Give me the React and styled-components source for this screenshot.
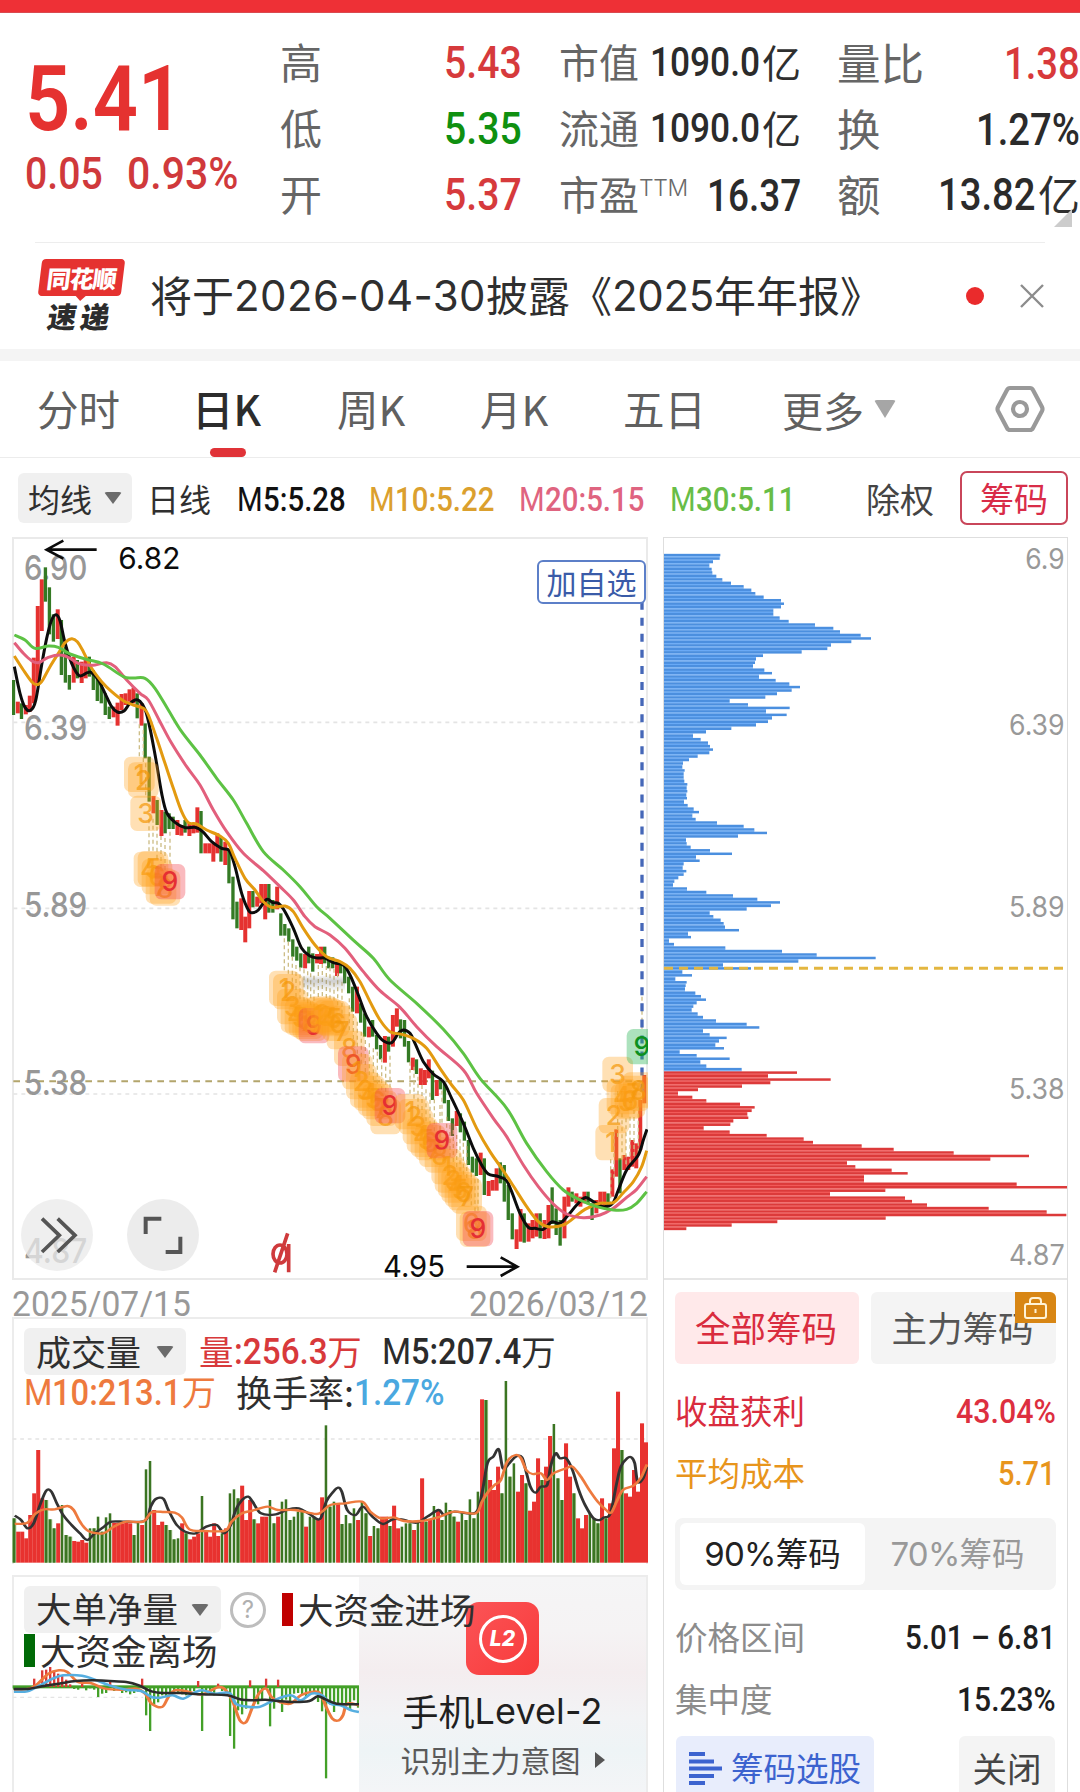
import React, { useState } from "react";
import styled, { createGlobalStyle } from "styled-components";

const GlobalStyle = createGlobalStyle`
    * {
        box-sizing: border-box;
    }

    body {
        margin: 0;
        background: #ffffff;
        overflow: hidden;
        font-family: Inter, "Noto Sans CJK SC", sans-serif;
        color: #2f2f2f;
    }
`;

/* ---------- data ---------- */

const RED = "#e53230";
const GREEN = "#0f9010";

const quoteRows = [
    { a: "高", av: "5.43", ac: "#d63a3c", b: "市值", bv: "1090.0", bu: "亿", c: "量比", cv: "1.38", cc: "#d8393b" },
    { a: "低", av: "5.35", ac: GREEN, b: "流通", bv: "1090.0", bu: "亿", c: "换", cv: "1.27%" },
    { a: "开", av: "5.37", ac: "#d63a3c", b: "市盈", sup: "TTM", bv: "16.37", c: "额", cv: "13.82", cu: "亿" },
];

const tabs = [
    { label: "分时", width: 155 },
    { label: "日K", width: 145 },
    { label: "周K", width: 143 },
    { label: "月K", width: 143 },
    { label: "五日", width: 159 },
];

const averages = [
    { name: "M", value: "5:5.28", color: "#111111", width: 132 },
    { name: "M", value: "10:5.22", color: "#dba02e", width: 150 },
    { name: "M", value: "20:5.15", color: "#df6480", width: 151 },
    { name: "M", value: "30:5.11", color: "#68bd47", width: 196 },
];

// one entry per trading day: direction, high, low
const candlesEarly = `g450-555 r515-550 g520-567 r525-553 r497-545 r383-520 r228-460 r148-303 g112-215 g172-313
g253-335 r238-327 g270-435 g350-458 g435-479 r380-458 g390-445 r395-459 r385-445 g380-440
g420-480 g440-513 g460-520 g490-555 g530-567 r530-562 r518-587 r492-540 r490-525 r478-515
r473-520 g490-565 r520-587 g580-685 g680-815 r798-850 g810-885 r840-918 g845-910 g850-897
g860-897 r870-915 r885-917 g870-908 r880-918 r880-910 r832-908 g843-970 r940-970 r940-970
r940-995 r910-970 g920-995 r935-1005 g960-1060 g1040-1168`;

const candlesLate = `g245-325 r235-330 r290-367 r213-325 g213-262 r230-260 r192-250 r192-298 g192-278 g240-278
r200-268 g280-347 g312-347 g325-365 g358-410 g380-422 g400-443 r402-445 g380-430 g400-455
r402-430 r380-432 g380-430 g410-445 g412-445 r425-468 g425-460 g440-490 g470-520 g500-575
r500-580 g550-608 g580-650 r620-652 g600-650 g645-688 g675-718 r648-728 g650-695 r585-680
r565-620 g598-655 g600-680 g663-727 r713-750 g718-762 r745-795 r750-795 r718-775 g752-840
r780-828 g780-808 g790-850 g840-903 g895-948 r873-918 g880-937 g905-962 g960-1035 g1010-1058
g1015-1068 r998-1065 g1015-1125 r1083-1128 r1080-1112 r1045-1112 g1027-1090 g1035-1145 g1095-1200 g1180-1258
r1228-1287 r1167-1265 g1180-1268 r1210-1265 r1200-1255 r1180-1250 g1180-1255 r1200-1257 r1155-1255 g1102-1212
g1165-1245 g1200-1277 r1130-1255 r1102-1160 g1115-1145 r1120-1150 r1130-1160 r1115-1150 g1115-1150 g1150-1200
r1140-1180 r1115-1165 r1115-1165 g1120-1160 r1048-1130 r928-1070 g1015-1120 r1005-1050 r1010-1050 r960-1040
r970-1045 r840-990 r765-850`;

const parseCandles = (text, dy) =>
    text.split(/\s+/).map((item) => {
        const [high, low] = item.slice(1).split("-").map(Number);
        return { up: item[0] === "r", high: high + dy, low: low + dy };
    });

const candles = [...parseCandles(candlesEarly, 0), ...parseCandles(candlesLate, 870)];
const candleX = (i) => 41 + i * 11.97;

const parsePoints = (text, dx = 0, dy = 0) =>
    text.split(" ").map((p) => {
        const [x, y] = p.split(",").map(Number);
        return [x + dx, y + dy];
    });

const smooth = (pts) => {
    let d = `M${pts[0][0]} ${pts[0][1]}`;
    for (let i = 0; i < pts.length - 1; i++) {
        const p0 = pts[i - 1] || pts[i];
        const p1 = pts[i];
        const p2 = pts[i + 1];
        const p3 = pts[i + 2] || p2;
        d += `C${p1[0] + (p2[0] - p0[0]) / 6} ${p1[1] + (p2[1] - p0[1]) / 6} ${p2[0] - (p3[0] - p1[0]) / 6} ${p2[1] - (p3[1] - p1[1]) / 6} ${p2[0]} ${p2[1]}`;
    }
    return d;
};

const maLines = [
    {
        color: "#0c0c0c",
        early: "43,410 60,490 75,532 92,541 107,512 125,405 140,325 155,270 168,254 180,272 195,338 215,400 238,437 262,428 275,428 295,450 315,490 335,530 352,546 372,543 388,522 405,510 420,514 436,540 450,595 468,690 485,790 500,848 525,877 555,893 585,892 608,905 635,935 665,955 688,962 705,1010 725,1090 745,1140 757,1148 775,1140",
        late: "110,238 128,248 145,250 165,275 190,325 215,385 240,408 262,414 285,414 310,428 340,435 360,465 385,525 410,590 440,640 462,664 485,668 505,640 520,630 540,640 555,670 580,725 610,762 640,785 665,835 700,910 730,985 755,1035 775,1062 800,1068 828,1080 845,1115 870,1180 895,1222 915,1225 940,1228 965,1206 990,1210 1015,1185 1040,1155 1065,1133 1090,1145 1120,1160 1148,1150 1165,1110 1190,1050 1225,1005 1240,960 1251,928",
    },
    {
        color: "#e39a10",
        early: "43,378 70,420 95,455 110,464 125,455 150,410 175,370 195,338 215,326 232,335 250,365 275,415 305,455 335,485 370,512 400,525 430,535 445,555 470,625 495,700 520,775 545,845 565,878 590,882 620,900 660,918 685,940 705,985 735,1045 765,1080 790,1115 815,1132 855,1128",
        late: "190,275 220,325 255,375 290,410 330,425 360,445 390,485 420,545 450,600 480,635 515,643 550,655 590,685 630,745 665,795 700,840 740,925 780,995 815,1045 850,1098 890,1160 925,1205 955,1220 1000,1215 1030,1195 1065,1168 1110,1150 1150,1148 1180,1118 1210,1085 1235,1040 1250,992",
    },
    {
        color: "#e25f7c",
        early: "43,338 70,370 95,392 115,398 145,382 180,375 205,382 235,400 260,405 285,405 320,398 345,410 380,450 420,490 445,510 480,575 515,640 560,710 600,765 640,840 680,905 730,970 790,1022 840,1070 880,1110 915,1160",
        late: "255,320 300,345 345,385 400,455 450,512 510,562 560,620 620,680 700,750 740,820 790,895 830,950 880,1035 925,1100 970,1152 1010,1182 1060,1193 1110,1185 1150,1165 1190,1132 1220,1108 1250,1070",
    },
    {
        color: "#5dc244",
        early: "43,315 75,330 105,355 145,348 175,352 210,372 260,388 310,402 370,440 400,444 435,445 465,475 505,540 545,605 600,675 650,745 700,810 740,880 790,965 850,1020 900,1070 950,1130",
        late: "300,295 375,365 430,415 480,480 560,550 640,628 700,700 750,775 830,865 890,970 950,1055 1000,1110 1050,1140 1100,1160 1150,1170 1190,1168 1220,1150 1250,1115",
    },
];

// count markers under / over the candles: digit, x, y
const countMarks = [
    [1, 418, 733], [2, 430, 750], [3, 437, 850], [4, 447, 1018], [5, 459, 1016], [6, 471, 1040], [7, 483, 1068], [8, 495, 1074], [9, 510, 1055, "r"],
    [1, 853, 1375], [2, 865, 1385], [3, 877, 1430], [4, 888, 1455], [5, 900, 1462], [6, 912, 1468], [7, 923, 1474], [8, 932, 1480], [9, 942, 1487, "r"],
    [1, 955, 1455], [2, 967, 1452], [3, 979, 1458], [4, 990, 1462], [5, 1002, 1466], [6, 1013, 1480], [7, 1026, 1505], [8, 1048, 1555], [9, 1060, 1602, "r"],
    [1, 1072, 1625], [2, 1084, 1655], [3, 1096, 1680], [4, 1108, 1690], [5, 1120, 1705], [6, 1132, 1715], [7, 1145, 1735], [8, 1157, 1760], [9, 1170, 1727, "r"],
    [1, 1230, 1745], [2, 1242, 1760], [3, 1254, 1790], [4, 1266, 1815], [5, 1278, 1828], [6, 1290, 1838], [7, 1303, 1858], [8, 1320, 1875], [9, 1326, 1832, "r"],
    [1, 1340, 1910], [2, 1350, 1935], [3, 1360, 1950], [4, 1370, 1965], [5, 1380, 1978], [6, 1390, 1988], [7, 1400, 1998], [6, 1414, 2080], [8, 1425, 2098], [9, 1434, 2096, "r"],
    [1, 1832, 1838], [2, 1842, 1757], [3, 1853, 1633], [4, 1866, 1700], [5, 1878, 1715], [6, 1890, 1710], [7, 1902, 1690], [8, 1915, 1680], [9, 1926, 1550, "g"],
];

const markColors = {
    o: { box: "#ffa21a", text: "#f5980a", alpha: 0.33, textAlpha: 0.7 },
    r: { box: "#f2404a", text: "#e52f33", alpha: 0.36, textAlpha: 1 },
    g: { box: "#2fb65a", text: "#0c9020", alpha: 0.4, textAlpha: 1 },
};

const volumes = `g595 r635 r635 r655 r585 r520 r390 r535 g540 g598 g625 r610 g555 g645 g650 r663 r665 r660 r668 g625
g625 g590 g635 g592 g580 r608 r608 r610 r608 r610 g645 g603 r615 g448 g423 r570 r615 r605 g615 g630
g658 g655 r610 g640 r658 r650 r640 g528 r630 r650 r610 r648 g640 r625 g520 g508 g535 r497 r600 r540
g598 r610 r590 r590 g540 g610 r590 g545 g538 g600 g590 g575 g575 r620 g590 g590 r598 r532 g316 g560
g545 r550 g612 g585 g610 g565 r600 g545 g580 r648 g618 g625 r590 r590 g618 r557 r625 g620 g610 g610
r630 g600 r475 g605 r600 g558 r570 g600 g548 g570 g590 r605 g580 g600 g538 g595 g515 r238 g240 r480
r510 r440 g520 g183 g470 g430 r515 r465 g490 r572 r545 r415 g480 r440 r348 g312 g475 g540 r370 r470
g520 r595 r625 r585 g580 g595 g610 r535 g595 r550 r385 r215 g390 r520 r530 r450 r515 r310 r367`
    .split(/\s+/)
    .map((item) => ({ up: item[0] === "r", top: Number(item.slice(1)) }));

const volumeMa5 = "35,587 50,600 65,625 80,610 95,555 110,512 122,515 135,550 150,585 170,615 190,640 207,660 225,640 245,622 265,605 300,605 345,602 358,560 370,537 388,536 400,570 420,615 440,635 465,640 490,620 515,615 532,640 548,615 560,570 575,540 590,530 600,545 620,580 655,583 685,568 710,565 735,582 760,597 775,545 790,518 803,503 812,515 825,570 845,585 862,560 885,590 910,612 935,597 960,600 990,608 1015,590 1042,570 1055,585 1080,575 1130,578 1145,520 1158,430 1172,410 1185,388 1195,445 1210,430 1225,410 1240,412 1250,455 1260,500 1272,518 1285,500 1300,495 1308,440 1320,400 1330,415 1345,415 1360,450 1375,510 1390,555 1410,595 1425,600 1435,592 1450,580 1465,490 1475,440 1490,415 1500,412 1508,430 1515,485 1528,475 1537,440";
const volumeMa10 = "35,612 65,608 85,580 105,568 130,568 160,558 175,570 190,605 210,633 245,640 270,620 300,605 340,605 360,577 390,576 415,578 432,592 450,628 485,633 535,632 550,605 575,580 600,572 635,560 660,570 700,570 750,582 765,575 785,555 820,550 860,545 880,575 905,595 935,592 960,603 1000,603 1040,592 1080,575 1130,580 1145,545 1160,515 1175,495 1190,480 1205,425 1225,405 1238,415 1250,450 1265,462 1285,460 1300,480 1315,460 1345,445 1360,440 1380,470 1400,510 1420,545 1440,570 1452,578 1465,545 1480,510 1505,497 1522,475 1537,433";

// net big-order flow, bar end per day (380 is the zero line)
const netFlow = [
    388, 390, 388, 386, 384, 355, 376, 330, 328, 320, 335, 340, 345, 358, 372, 386, 388, 370, 390, 384,
    388, 410, 400, 398, 360, 392, 388, 398, 396, 402, 398, 394, 355, 465, 512, 432, 426, 405, 408, 396,
    392, 396, 402, 405, 396, 392, 362, 512, 400, 402, 405, 370, 392, 398, 527, 565, 450, 462, 445, 360,
    430, 432, 420, 355, 498, 445, 358, 455, 418, 432, 400, 398, 402, 412, 396, 400, 425, 453, 654, 432,
    455, 428, 440, 430, 448, 420, 442,
];
const netBlack = "33,386 70,385 100,378 140,370 180,362 220,360 260,362 300,365 330,375 360,393 390,398 430,398 480,402 540,405 570,417 600,420 630,418 660,422 700,425 735,422 755,408 775,418 800,430 853,432";
const netBlue = "33,394 65,393 95,375 125,355 150,345 195,346 230,360 260,375 300,388 335,392 360,410 380,412 410,405 435,415 460,398 480,390 510,400 545,398 560,430 580,438 615,440 650,420 690,405 715,420 740,400 765,405 785,430 810,435 835,450 853,455";
const netOrange = "33,390 70,385 90,370 115,340 140,330 160,335 185,365 215,368 250,385 290,388 325,385 345,400 360,430 385,440 400,410 415,390 440,392 480,402 520,380 540,395 555,430 570,480 585,485 600,440 615,400 632,385 645,410 665,425 690,430 715,405 740,395 760,398 775,440 790,475 805,480 815,465 825,430 853,435";

const chipsTrapped = [
    211, 209, 189, 178, 185, 187, 199, 217, 243, 281, 304, 316, 341, 393, 402, 393, 370, 370, 389, 416,
    495, 550, 570, 632, 663, 604, 543, 532, 455, 339, 318, 315, 309, 343, 366, 327, 377, 418, 450, 425,
    381, 346, 239, 294, 419, 348, 410, 366, 354, 318, 244, 168, 129, 152, 174, 180, 189, 178, 143, 117,
    99, 97, 104, 101, 101, 103, 112, 110, 112, 109, 111, 102, 113, 131, 147, 127, 137, 201, 281, 313,
    351, 264, 108, 110, 122, 180, 246, 138, 149, 101, 98, 109, 101, 85, 73, 69, 111, 169, 249, 322,
    390, 363, 290, 179, 190, 212, 221, 225, 267, 114, 123, 57, 72, 226, 396, 500, 677, 445, 219, 303,
    97, 126, 76, 110, 107, 105, 136, 153, 168, 140, 130, 125, 143, 159, 198, 290, 328, 159, 179, 230,
    207, 196, 222, 89, 140, 239, 151, 169, 275,
];
const chipsProfit = [
    441, 354, 542, 361, 276, 144, 84, 127, 169, 270, 314, 305, 292, 295, 250, 241, 161, 239, 350, 461,
    489, 635, 731, 911, 1137, 1021, 591, 616, 725, 773, 642, 642, 1100, 1251, 706, 540, 765, 786, 831, 1016,
    1190, 1249, 707, 382, 245, 109,
];
const chips = [
    ...chipsTrapped.map((end) => ({ end, profit: false })),
    ...chipsProfit.map((end) => ({ end, profit: true })),
];

/* ---------- shared parts ---------- */

// advance widths in em, used to close the room left by a squeezed number
const ADVANCE = { ".": 0.27, ":": 0.26, "%": 0.74, M: 0.875, "/": 0.4, " ": 0.25, "–": 0.56 };

const spareWidth = ({ children, $size = 45, $tight = 0, $squeeze = 0.88 }) => {
    const text = String(children);
    const natural = [...text].reduce((sum, ch) => sum + (ADVANCE[ch] || 0.565) * $size + $tight, 0);
    return natural * (1 - $squeeze);
};

const Page = styled.div`
    width: 1080px;
    height: 1792px;
    overflow: hidden;
    background: #ffffff;
`;

const TopBar = styled.div`
    height: 13px;
    background: #ee3036;
    border-bottom: 1px solid #d94a50;
`;

const Din = styled.span`
    display: inline-block;
    font-family: Roboto, "Noto Sans CJK SC", sans-serif;
    font-weight: ${(props) => props.$weight || 500};
    font-size: ${(props) => props.$size || 45}px;
    letter-spacing: ${(props) => props.$tight || 0}px;
    color: ${(props) => props.$color || "#2b2b2b"};
    line-height: 1;
    white-space: nowrap;
    transform: scaleX(${(props) => props.$squeeze || 0.88});
    transform-origin: left center;
    margin-right: ${(props) => -spareWidth(props)}px;
`;

const Han = styled.span`
    display: inline-block;
    font-family: "Noto Sans CJK SC", sans-serif;
    font-weight: ${(props) => props.$weight || 400};
    font-size: ${(props) => props.$size || 42}px;
    padding-bottom: ${(props) => (props.$lift === undefined ? 0.08 : props.$lift)}em;
    color: ${(props) => props.$color || "#2f2f2f"};
    line-height: 1;
    white-space: nowrap;
`;

const Caret = styled.span`
    width: 0;
    height: 0;
    border-left: ${(props) => props.$size || 9}px solid transparent;
    border-right: ${(props) => props.$size || 9}px solid transparent;
    border-top: ${(props) => props.$tall || 12}px solid ${(props) => props.$color || "#6b6b6b"};
    border-radius: 3px;
`;

/* ---------- quote header ---------- */

const Quote = styled.section`
    display: flex;
    height: 229px;
    padding-top: 17px;
    position: relative;
`;

const PriceBlock = styled.div`
    width: 280px;
    padding: 25px 0 0 25px;
    display: flex;
    flex-direction: column;
    align-items: flex-start;
`;

const ChangeRow = styled.div`
    display: flex;
    gap: 24px;
    margin-top: 6px;
`;

const QuoteTable = styled.div`
    flex: 1;
    display: flex;
    flex-direction: column;
`;

const QuoteRow = styled.div`
    display: grid;
    grid-template-columns: 242px 37px 242px 36px 243px;
    height: 66px;
    align-items: center;
`;

const QuoteCell = styled.div`
    display: flex;
    justify-content: space-between;
    align-items: center;
    grid-column: ${(props) => props.$col};
`;

const ValueGroup = styled.span`
    display: inline-flex;
    align-items: center;
    gap: 2px;
`;

const Sup = styled.sup`
    font-family: Inter, sans-serif;
    font-weight: 300;
    font-size: 23px;
    letter-spacing: -0.4px;
    line-height: 1;
    vertical-align: 14px;
    color: #6a6a6a;
`;

const Corner = styled.span`
    position: absolute;
    right: 8px;
    bottom: 15px;
    border-left: 18px solid transparent;
    border-bottom: 18px solid #cccccc;
`;

/* ---------- news ---------- */

const News = styled.section`
    display: flex;
    align-items: center;
    height: 107px;
    margin: 0 35px;
    padding: 0 0 0 2px;
    border-top: 1px solid #ededed;
`;

const Brand = styled.div`
    width: 88px;
    height: 75px;
    display: flex;
    flex-direction: column;
    align-items: center;
`;

const BrandTag = styled.div`
    position: relative;
    width: 83px;
    height: 37px;
    border-radius: 4px;
    background: ${RED};
    transform: skewX(-7deg);
    display: flex;
    align-items: center;
    justify-content: center;
    color: #ffffff;
    font: 900 24px/1 "Noto Sans CJK SC", sans-serif;
    letter-spacing: -1px;

    &::after {
        content: "";
        position: absolute;
        top: 36px;
        left: 37px;
        border: 6px solid transparent;
        border-top-color: ${RED};
    }
`;

const BrandName = styled.div`
    margin-top: 5px;
    font: 900 29px/1 "Noto Sans CJK SC", sans-serif;
    letter-spacing: 4px;
    transform: skewX(-9deg);
    color: #2c2c2c;
`;

const NewsText = styled.div`
    flex: 1;
    display: flex;
    align-items: center;
    margin-left: 25px;
    color: #2f2f2f;
`;

const Latin = styled.span`
    font-family: Inter, sans-serif;
    font-weight: ${(props) => props.$weight || 400};
    font-size: ${(props) => props.$size || 42}px;
    letter-spacing: ${(props) => props.$tight || 0}px;
    color: ${(props) => props.$color || "#2f2f2f"};
    line-height: 1;
    white-space: nowrap;
`;

const Dot = styled.span`
    width: 18px;
    height: 18px;
    border-radius: 50%;
    background: #ea2b2c;
    margin-right: 35px;
`;

const Band = styled.div`
    height: 12px;
    background: #f4f4f4;
`;

/* ---------- tabs ---------- */

const TabBar = styled.nav`
    display: flex;
    align-items: center;
    height: 97px;
    padding-left: 37px;
    border-bottom: 1px solid #ececec;
`;

const Tab = styled.button`
    position: relative;
    width: ${(props) => props.$width}px;
    height: 96px;
    padding: 0;
    border: none;
    background: none;
    display: flex;
    align-items: center;
    text-align: left;

    &::after {
        content: "";
        display: ${(props) => (props.$active ? "block" : "none")};
        position: absolute;
        left: 18px;
        bottom: 0;
        width: 36px;
        height: 9px;
        border-radius: 5px;
        background: #e03338;
    }
`;

const MoreTab = styled(Tab)`
    gap: 10px;
`;

/* ---------- moving average row ---------- */

const AverageRow = styled.div`
    display: flex;
    align-items: center;
    height: 79px;
    padding: 0 12px 0 18px;
`;

const Picker = styled.button`
    display: flex;
    align-items: center;
    justify-content: space-between;
    width: ${(props) => props.$width}px;
    height: ${(props) => props.$height}px;
    padding: 0 ${(props) => props.$pad || 12}px;
    border: none;
    border-radius: 6px;
    background: #f0f0f0;
`;

const PeriodName = styled.span`
    display: inline-flex;
    width: 105px;
    padding-left: 15px;
`;

const AverageItem = styled.span`
    display: inline-flex;
    align-items: center;
    width: ${(props) => props.$width}px;
    padding-top: 4px;
`;

const ExRights = styled.span`
    padding-top: 3px;
`;

const ChipToggle = styled.button`
    width: 108px;
    height: 54px;
    margin-left: auto;
    padding: 0;
    border: 2px solid #c9465a;
    border-radius: 7px;
    background: #ffffff;
`;

/* ---------- body ---------- */

const Body = styled.main`
    display: grid;
    grid-template-columns: 636px 405px;
    column-gap: 15px;
    padding-left: 12px;
`;

const LeftColumn = styled.div`
    display: flex;
    flex-direction: column;
`;

const ChartBox = styled.div`
    position: relative;
    height: 743px;
    border: 2px solid #eaeaea;

    svg {
        position: absolute;
        left: -2px;
        top: -2px;
    }
`;

const AddButton = styled.button`
    position: absolute;
    right: 0;
    top: 21px;
    width: 109px;
    height: 44px;
    padding: 0;
    border: 2px solid #5c7fc8;
    border-radius: 6px;
    background: #ffffff;
`;

const DateRow = styled.div`
    display: flex;
    justify-content: space-between;
    align-items: center;
    height: 37px;
    padding-top: 12px;
`;

const VolumePanel = styled.section`
    position: relative;
    height: 247px;
    border: 2px solid #ececec;
    border-bottom: none;

    svg {
        position: absolute;
        left: -2px;
        top: -2px;
    }
`;

const Legend = styled.div`
    position: relative;
    z-index: 1;
    display: flex;
    flex-direction: column;
    padding: 9px 0 0 10px;
`;

const LegendRow = styled.div`
    display: flex;
    align-items: center;
    height: ${(props) => props.$height}px;
`;

const LegendItem = styled.span`
    display: inline-flex;
    align-items: center;
    margin-left: ${(props) => props.$gap || 0}px;
`;

const Swatch = styled.span`
    width: 11px;
    height: 33px;
    margin-right: 5px;
    background: ${(props) => props.$color};
`;

const NetPanel = styled.section`
    position: relative;
    display: flex;
    justify-content: flex-end;
    height: 218px;
    margin-top: 11px;
    border: 2px solid #ececec;
    border-bottom: none;

    > svg {
        position: absolute;
        left: -2px;
        top: -2px;
    }
`;

const NetLegend = styled(Legend)`
    position: absolute;
    left: 0;
    top: 0;
`;

const HelpIcon = styled.span`
    width: 36px;
    height: 36px;
    margin-left: 9px;
    border: 3px solid #bdbdbd;
    border-radius: 50%;
    display: inline-flex;
    align-items: center;
    justify-content: center;
    font: 400 24px/1 Inter, sans-serif;
    color: #b0b0b0;
`;

const Promo = styled.div`
    position: relative;
    width: 287px;
    height: 216px;
    padding-top: 25px;
    display: flex;
    flex-direction: column;
    align-items: center;
    background: linear-gradient(180deg, #f5f5f6 0%, #f5f3f4 25%, #f4edef 44%, #f2f3f5 65%, #eef4f6 80%, #f4f5f7 100%);
`;

const PromoIcon = styled.div`
    width: 73px;
    height: 73px;
    margin-bottom: 16px;
    border-radius: 13px;
    background: linear-gradient(135deg, #fb5457, #f83a3a);
    display: flex;
    align-items: center;
    justify-content: center;
`;

const PromoRing = styled.div`
    width: 48px;
    height: 48px;
    border: 3px solid #ffffff;
    border-radius: 50%;
    display: flex;
    align-items: center;
    justify-content: center;
    color: #ffffff;
    font: italic 800 21px/1 Inter, sans-serif;
`;

const PromoLine = styled.div`
    display: flex;
    align-items: center;
    height: ${(props) => props.$height}px;
    gap: ${(props) => props.$gap || 0}px;
`;

const Arrow = styled.span`
    border-left: 10px solid #555555;
    border-top: 8px solid transparent;
    border-bottom: 8px solid transparent;
`;

/* ---------- chip panel ---------- */

const RightColumn = styled.aside`
    display: flex;
    flex-direction: column;
    height: 1255px;
    border: 1px solid #dedede;
    border-bottom: none;
`;

const ChipChartBox = styled.div`
    height: 742px;
    border-bottom: 2px solid #e6e6e6;

    svg {
        display: block;
        margin: -1px;
    }
`;

const ChipInfo = styled.div`
    padding: 12px 11px 0 11px;
`;

const ButtonPair = styled.div`
    display: grid;
    grid-template-columns: 184px 185px;
    column-gap: 12px;
    margin-bottom: 17px;
`;

const ChipButton = styled.button`
    position: relative;
    height: 72px;
    padding: 0 2px 0 0;
    border: none;
    border-radius: 6px;
    background: ${(props) => (props.$active ? "#ffe9ea" : "#f4f4f4")};
`;

const LockBadge = styled.span`
    position: absolute;
    right: 0;
    top: 0;
    width: 41px;
    height: 31px;
    border-radius: 0 6px 0 0;
    background: #d88614;
    display: flex;
    align-items: center;
    justify-content: center;
`;

const StatRow = styled.div`
    display: flex;
    justify-content: space-between;
    align-items: center;
    height: 62px;
    padding: 0 0 1px;
`;

const Segment = styled.div`
    display: flex;
    height: 72px;
    margin: 13px 0 17px;
    padding: 5px;
    border-radius: 8px;
    background: #f4f4f4;
`;

const SegmentItem = styled.button`
    width: 185px;
    padding: 0;
    border: none;
    border-radius: 6px;
    background: ${(props) => (props.$active ? "#ffffff" : "transparent")};
    display: flex;
    align-items: center;
    justify-content: center;
`;

const Footer = styled.div`
    display: flex;
    justify-content: space-between;
    padding: 5px 1px 0;
`;

const FooterButton = styled.button`
    width: ${(props) => props.$width}px;
    height: 72px;
    padding: 0 0 6px;
    border: none;
    border-radius: 6px;
    background: ${(props) => props.$bg};
    display: flex;
    align-items: center;
    justify-content: center;
    gap: 9px;
`;

/* ---------- charts ---------- */

const KLineChart = () => (
    <svg width="636" height="743" viewBox="36 21 1908 2229">
        <defs>
            <linearGradient id="shade" x1="0" y1="0" x2="0" y2="1">
                <stop offset="0" stopColor="#777" stopOpacity="0" />
                <stop offset="0.35" stopColor="#777" stopOpacity="0.35" />
                <stop offset="1" stopColor="#777" stopOpacity="0" />
            </linearGradient>
        </defs>
        {[577, 1135, 1692].map((y) => (
            <line key={y} x1="40" x2="1940" y1={y} y2={y} stroke="#e4e4e4" strokeWidth="5" strokeDasharray="12 12" />
        ))}
        <line x1="40" x2="1940" y1="1654" y2="1654" stroke="#b3a56c" strokeWidth="6" strokeDasharray="20 16" />
        <g fill="#979797" fontFamily="Inter, sans-serif" fontWeight="500" fontSize="104">
            <text x="72" y="150" textLength="190" lengthAdjust="spacingAndGlyphs">6.90</text>
            <text x="72" y="629" textLength="190" lengthAdjust="spacingAndGlyphs">6.39</text>
            <text x="72" y="1160" textLength="190" lengthAdjust="spacingAndGlyphs">5.89</text>
            <text x="72" y="1695" textLength="190" lengthAdjust="spacingAndGlyphs">5.38</text>
            <text x="72" y="2200" textLength="190" lengthAdjust="spacingAndGlyphs">4.87</text>
        </g>
        {candles.map((c, i) => (
            <rect key={i} x={candleX(i) - 5.5} y={c.high} width={c.up ? 12 : 10} height={c.low - c.high} fill={c.up ? RED : "#347a24"} />
        ))}
        {countMarks.map(([, x, y], i) => (
            <line key={i} x1={x} x2={x} y1={y > 1600 && x > 1800 ? y + 50 : y - 150} y2={y > 1600 && x > 1800 ? y + 190 : y - 50} stroke="#cdbd86" strokeWidth="4" strokeDasharray="12 9" />
        ))}
        {maLines.map((line) => (
            <path
                key={line.color}
                d={smooth([...parsePoints(line.early), ...parsePoints(line.late, 690, 870)])}
                fill="none"
                stroke={line.color}
                strokeWidth="9"
            />
        ))}
        <rect x="905" y="1335" width="130" height="50" fill="url(#shade)" />
        <line x1="1926" x2="1926" y1="215" y2="1700" stroke="#4567b8" strokeWidth="10" strokeDasharray="24 24.2" />
        {countMarks.map(([digit, x, y, kind], i) => {
            const c = markColors[kind || "o"];
            return (
                <g key={i}>
                    <rect x={x - 46} y={y - 53} width="92" height="106" rx="20" fill={c.box} opacity={c.alpha} />
                    <text x={x} y={y + 29} textAnchor="middle" fontFamily="Inter, sans-serif" fontWeight="500" fontSize="80" fill={c.text} opacity={c.textAlpha}>
                        {digit}
                    </text>
                </g>
            );
        })}
        <g fill="#0c0c0c" fontFamily="Inter, sans-serif" fontWeight="400" fontSize="90">
            <text x="355" y="117" textLength="186" lengthAdjust="spacingAndGlyphs">6.82</text>
            <text x="1149" y="2241" textLength="186" lengthAdjust="spacingAndGlyphs">4.95</text>
        </g>
        <g fill="none" stroke="#0c0c0c" strokeWidth="8">
            <path d="M290 59H140M190 32L140 59L190 86" />
            <path d="M1400 2210H1552M1502 2182L1552 2210L1502 2238" />
        </g>
        <g fill="none" stroke="#cf3a3c" strokeWidth="11">
            <ellipse cx="840" cy="2172" rx="21" ry="27" />
            <path d="M866 2142V2227M863 2110L824 2227" />
        </g>
        <circle cx="171" cy="2115" r="108" fill="#eaeaea" opacity="0.75" />
        <circle cx="489" cy="2115" r="108" fill="#ececec" />
        <g fill="none" stroke="#555555" strokeWidth="11">
            <path d="M126 2066L178 2116L126 2166M173 2066L225 2116L173 2166" />
            <path d="M437 2112V2066H484M497 2166H541V2120" strokeWidth="12" />
        </g>
    </svg>
);

const VolumeChart = () => (
    <svg width="636" height="247" viewBox="28.5 -9 1511 741" preserveAspectRatio="none">
        <line x1="30" x2="1538" y1="357" y2="357" stroke="#e4e4e4" strokeWidth="4" strokeDasharray="9 9" />
        {volumes.map((v, i) => (
            <g key={i}>
                <rect x={29 + i * 9.5} y={v.top} width="9.6" height={728 - v.top} fill={v.up ? "#e8322f" : "#9cbd86"} opacity={!v.up && (volumes[i - 1] || v).top > v.top ? 0 : 1} />
                {!v.up && <rect x={30.4 + i * 9.5} y={v.top} width="6" height={728 - v.top} fill="#3b7522" />}
            </g>
        ))}
        <path d={smooth(parsePoints(volumeMa5))} fill="none" stroke="#333333" strokeWidth="7" />
        <path d={smooth(parsePoints(volumeMa10))} fill="none" stroke="#ee7a3e" strokeWidth="7" />
    </svg>
);

const NetChart = () => (
    <svg width="347" height="218" viewBox="28.5 44 824.5 654" preserveAspectRatio="none">
        <line x1="30" x2="340" y1="411" y2="411" stroke="#e4e4e4" strokeWidth="4" strokeDasharray="9 9" />
        <rect x="30" y="375" width="823" height="9" fill="#43a028" />
        {netFlow.map((end, i) => (
            <rect key={i} x={31 + i * 9.5} y={Math.min(end, 380)} width="5.5" height={Math.abs(end - 380)} fill={end < 380 ? "#dc3a36" : "#43a028"} />
        ))}
        <g fill="none" strokeWidth="7.5">
            <path d={smooth(parsePoints(netOrange))} stroke="#ee7a3e" />
            <path d={smooth(parsePoints(netBlue))} stroke="#56aee0" />
            <path d={smooth(parsePoints(netBlack))} stroke="#2c2c2c" />
        </g>
    </svg>
);

const ChipChart = () => (
    <svg width="405" height="742" viewBox="39 21 1215 2226">
        {chips.map((chip, i) => {
            const y = 71.5 + i * 10.42;
            const next = chips[i + 1] ? Math.min(chip.end, chips[i + 1].end) : 0;
            return (
                <g key={i}>
                    <rect x="42" y={y} width={chip.end - 42} height="7.5" fill={chip.profit ? "#dc3a3a" : "#4b8fdf"} />
                    {next > 42 && <rect x="42" y={y + 7.2} width={next - 42} height="3.6" fill={chip.profit ? "#f25a59" : "#69aaf6"} />}
                </g>
            );
        })}
        <line x1="42" x2="1245" y1="1315" y2="1315" stroke="#e3b640" strokeWidth="9" strokeDasharray="27 18" />
        <g fill="#999999" fontFamily="Inter, sans-serif" fontSize="84" textAnchor="end">
            <text x="1244" y="116" textLength="118" lengthAdjust="spacingAndGlyphs">6.9</text>
            <text x="1244" y="614" textLength="167" lengthAdjust="spacingAndGlyphs">6.39</text>
            <text x="1244" y="1160" textLength="167" lengthAdjust="spacingAndGlyphs">5.89</text>
            <text x="1244" y="1707" textLength="167" lengthAdjust="spacingAndGlyphs">5.38</text>
            <text x="1244" y="2204" textLength="167" lengthAdjust="spacingAndGlyphs">4.87</text>
        </g>
    </svg>
);

/* ---------- app ---------- */

const App = () => {
    const [activeTab, setActiveTab] = useState("日K");
    const [range, setRange] = useState(90);

    return (
        <Page>
            <GlobalStyle />
            <TopBar />
            <Quote>
                <PriceBlock>
                    <Din $size={90} $weight={600} $color={RED}>5.41</Din>
                    <ChangeRow>
                        <Din $color="#d0393b" $squeeze={0.87}>0.05</Din>
                        <Din $color="#d0393b" $squeeze={0.91}>0.93%</Din>
                    </ChangeRow>
                </PriceBlock>
                <QuoteTable>
                    {quoteRows.map((row) => (
                        <QuoteRow key={row.a}>
                            <QuoteCell $col={1}>
                                <Han $color="#666666">{row.a}</Han>
                                <Din $color={row.ac} $squeeze={0.87}>{row.av}</Din>
                            </QuoteCell>
                            <QuoteCell $col={3}>
                                <Han $size={40} $color="#666666">
                                    {row.b}
                                    {row.sup && <Sup>{row.sup}</Sup>}
                                </Han>
                                <ValueGroup>
                                    <Din $size={row.bu ? 41 : 45} $squeeze={row.bu ? 0.86 : 0.82}>{row.bv}</Din>
                                    {row.bu && <Han $size={39}>{row.bu}</Han>}
                                </ValueGroup>
                            </QuoteCell>
                            <QuoteCell $col={5}>
                                <Han $size={43.5} $color="#666666">{row.c}</Han>
                                <ValueGroup>
                                    <Din $color={row.cc} $squeeze={0.85}>{row.cv}</Din>
                                    {row.cu && <Han $size={42}>{row.cu}</Han>}
                                </ValueGroup>
                            </QuoteCell>
                        </QuoteRow>
                    ))}
                </QuoteTable>
                <Corner />
            </Quote>

            <News>
                <Brand>
                    <BrandTag>同花顺</BrandTag>
                    <BrandName>速递</BrandName>
                </Brand>
                <NewsText>
                    <Han $size={42}>将于</Han>
                    <Latin $tight={0.4}>2026-04-30</Latin>
                    <Han $size={42}>披露《</Han>
                    <Latin $tight={-0.3}>2025</Latin>
                    <Han $size={42}>年年报》</Han>
                </NewsText>
                <Dot />
                <svg width="26" height="26" viewBox="0 0 26 26" stroke="#8c8c8c" strokeWidth="2.4">
                    <path d="M2 2L24 24M24 2L2 24" />
                </svg>
            </News>
            <Band />

            <TabBar>
                {tabs.map((tab) => (
                    <Tab key={tab.label} $width={tab.width} $active={activeTab === tab.label} onClick={() => setActiveTab(tab.label)}>
                        <Han $size={41.5} $lift={0} $weight={activeTab === tab.label ? 500 : 400} $color={activeTab === tab.label ? "#2c2c2c" : "#606060"}>
                            {tab.label}
                        </Han>
                    </Tab>
                ))}
                <MoreTab $width={213}>
                    <Han $size={41} $lift={0} $color="#606060">更多</Han>
                    <Caret $size={11} $tall={18} $color="#a6a6a6" />
                </MoreTab>
                <svg width="50" height="50" viewBox="0 0 50 50" fill="none" stroke="#999999" strokeWidth="4.2" strokeLinejoin="round">
                    <path d="M15 4H35Q37 4 38 6L47 23Q48 25 47 27L38 44Q37 46 35 46H15Q13 46 12 44L3 27Q2 25 3 23L12 6Q13 4 15 4Z" />
                    <circle cx="25" cy="25" r="7" />
                </svg>
            </TabBar>

            <AverageRow>
                <Picker $width={114} $height={50} $pad={10}>
                    <Han $size={32} $lift={0}>均线</Han>
                    <Caret />
                </Picker>
                <PeriodName>
                    <Han $size={32} $lift={0}>日线</Han>
                </PeriodName>
                {averages.map((item) => (
                    <AverageItem key={item.value} $width={item.width}>
                        <Din $size={33} $weight={400} $squeeze={0.89} $color={item.color}>{item.name}</Din>
                        <Din $size={33} $squeeze={0.89} $color={item.color}>{item.value}</Din>
                    </AverageItem>
                ))}
                <ExRights>
                    <Han $size={34} $lift={0} $color="#444444">除权</Han>
                </ExRights>
                <ChipToggle>
                    <Han $size={34} $lift={0} $color="#d92c48">筹码</Han>
                </ChipToggle>
            </AverageRow>

            <Body>
                <LeftColumn>
                    <ChartBox>
                        <KLineChart />
                        <AddButton>
                            <Han $size={30} $color="#3a5ba8">加自选</Han>
                        </AddButton>
                    </ChartBox>
                    <DateRow>
                        <Din $size={35} $weight={400} $squeeze={0.96} $color="#999999">2025/07/15</Din>
                        <Din $size={35} $weight={400} $squeeze={0.96} $color="#999999">2026/03/12</Din>
                    </DateRow>

                    <VolumePanel>
                        <VolumeChart />
                        <Legend>
                            <LegendRow $height={47}>
                                <Picker $width={162} $height={47} $pad={12}>
                                    <Han $size={35}>成交量</Han>
                                    <Caret />
                                </Picker>
                                <LegendItem $gap={13}>
                                    <Han $size={34.5} $color="#d8393b">量</Han>
                                    <Din $size={37} $squeeze={0.9} $color="#d8393b">:256.3</Din>
                                    <Han $size={34.5} $color="#d8393b">万</Han>
                                </LegendItem>
                                <LegendItem $gap={20}>
                                    <Din $size={37} $weight={400} $squeeze={0.9}>M</Din>
                                    <Din $size={37}>5:207.4</Din>
                                    <Han $size={34.5}>万</Han>
                                </LegendItem>
                            </LegendRow>
                            <LegendRow $height={34}>
                                <LegendItem>
                                    <Din $size={37} $weight={400} $color="#ee7a3e">M</Din>
                                    <Din $size={37} $squeeze={0.885} $color="#ee7a3e">10:213.1</Din>
                                    <Han $size={34} $color="#ee7a3e">万</Han>
                                </LegendItem>
                                <LegendItem $gap={20}>
                                    <Han $size={36}>换手率:</Han>
                                    <Din $size={37} $squeeze={0.9} $color="#4aa8e0">1.27%</Din>
                                </LegendItem>
                            </LegendRow>
                        </Legend>
                    </VolumePanel>

                    <NetPanel>
                        <NetChart />
                        <Promo>
                            <PromoIcon>
                                <PromoRing>L2</PromoRing>
                            </PromoIcon>
                            <PromoLine $height={40}>
                                <Han $size={36} $color="#1f1f1f">手机</Han>
                                <Latin $size={36} $tight={0.1} $color="#1f1f1f">Level-2</Latin>
                            </PromoLine>
                            <PromoLine $height={58} $gap={14}>
                                <Han $size={30} $color="#5a5a5a">识别主力意图</Han>
                                <Arrow />
                            </PromoLine>
                        </Promo>
                        <NetLegend>
                            <LegendRow $height={47}>
                                <Picker $width={197} $height={47} $pad={12}>
                                    <Han $size={35.5}>大单净量</Han>
                                    <Caret />
                                </Picker>
                                <HelpIcon>?</HelpIcon>
                                <LegendItem $gap={16}>
                                    <Swatch $color="#c00000" />
                                    <Han $size={35.5} $lift={0.04}>大资金进场</Han>
                                </LegendItem>
                            </LegendRow>
                            <LegendRow $height={34}>
                                <LegendItem>
                                    <Swatch $color="#006a06" />
                                    <Han $size={35.5} $lift={0.04}>大资金离场</Han>
                                </LegendItem>
                            </LegendRow>
                        </NetLegend>
                    </NetPanel>
                </LeftColumn>

                <RightColumn>
                    <ChipChartBox>
                        <ChipChart />
                    </ChipChartBox>
                    <ChipInfo>
                        <ButtonPair>
                            <ChipButton $active>
                                <Han $size={35.5} $color="#d92c3e">全部筹码</Han>
                            </ChipButton>
                            <ChipButton>
                                <Han $size={35.5} $color="#555555">主力筹码</Han>
                                <LockBadge>
                                    <svg width="26" height="24" viewBox="0 0 26 24" fill="none" stroke="#fff3d6" strokeWidth="2">
                                        <rect x="2" y="8" width="21" height="14" rx="2" />
                                        <path d="M7 8V5Q7 2 10 2H15Q18 2 18 5V8M12.5 13V17" />
                                    </svg>
                                </LockBadge>
                            </ChipButton>
                        </ButtonPair>
                        <StatRow>
                            <Han $size={32.5} $color="#d92c3e">收盘获利</Han>
                            <Din $size={33} $squeeze={0.92} $color="#dd2f3f">43.04%</Din>
                        </StatRow>
                        <StatRow>
                            <Han $size={32.5} $color="#e8951c">平均成本</Han>
                            <Din $size={33} $squeeze={0.88} $color="#e8951c">5.71</Din>
                        </StatRow>
                        <Segment>
                            <SegmentItem $active={range === 90} onClick={() => setRange(90)}>
                                <Latin $size={33} $tight={-0.8} $color="#222222">90%</Latin>
                                <Han $size={32.5} $color="#222222">筹码</Han>
                            </SegmentItem>
                            <SegmentItem $active={range === 70} onClick={() => setRange(70)}>
                                <Latin $size={33} $tight={-0.8} $color="#999999">70%</Latin>
                                <Han $size={32.5} $color="#999999">筹码</Han>
                            </SegmentItem>
                        </Segment>
                        <StatRow>
                            <Han $size={32.5} $color="#8c8c8c">价格区间</Han>
                            <Din $size={33} $squeeze={0.895} $color="#1f1f1f">5.01 – 6.81</Din>
                        </StatRow>
                        <StatRow>
                            <Han $size={32.5} $color="#8c8c8c">集中度</Han>
                            <Din $size={33} $squeeze={0.91} $color="#1f1f1f">15.23%</Din>
                        </StatRow>
                        <Footer>
                            <FooterButton $width={198} $bg="#e8edfc">
                                <svg width="33" height="34" viewBox="0 0 33 34" stroke="#3c63cf" strokeWidth="3.8">
                                    <path d="M0 2H16M0 9.5H25M0 16.5H33M0 24H25M0 31H16" />
                                </svg>
                                <Han $size={32.5} $color="#3c63cf">筹码选股</Han>
                            </FooterButton>
                            <FooterButton $width={96} $bg="#f4f4f4">
                                <Han $size={34.5} $color="#444444">关闭</Han>
                            </FooterButton>
                        </Footer>
                    </ChipInfo>
                </RightColumn>
            </Body>
        </Page>
    );
};

export default App;
